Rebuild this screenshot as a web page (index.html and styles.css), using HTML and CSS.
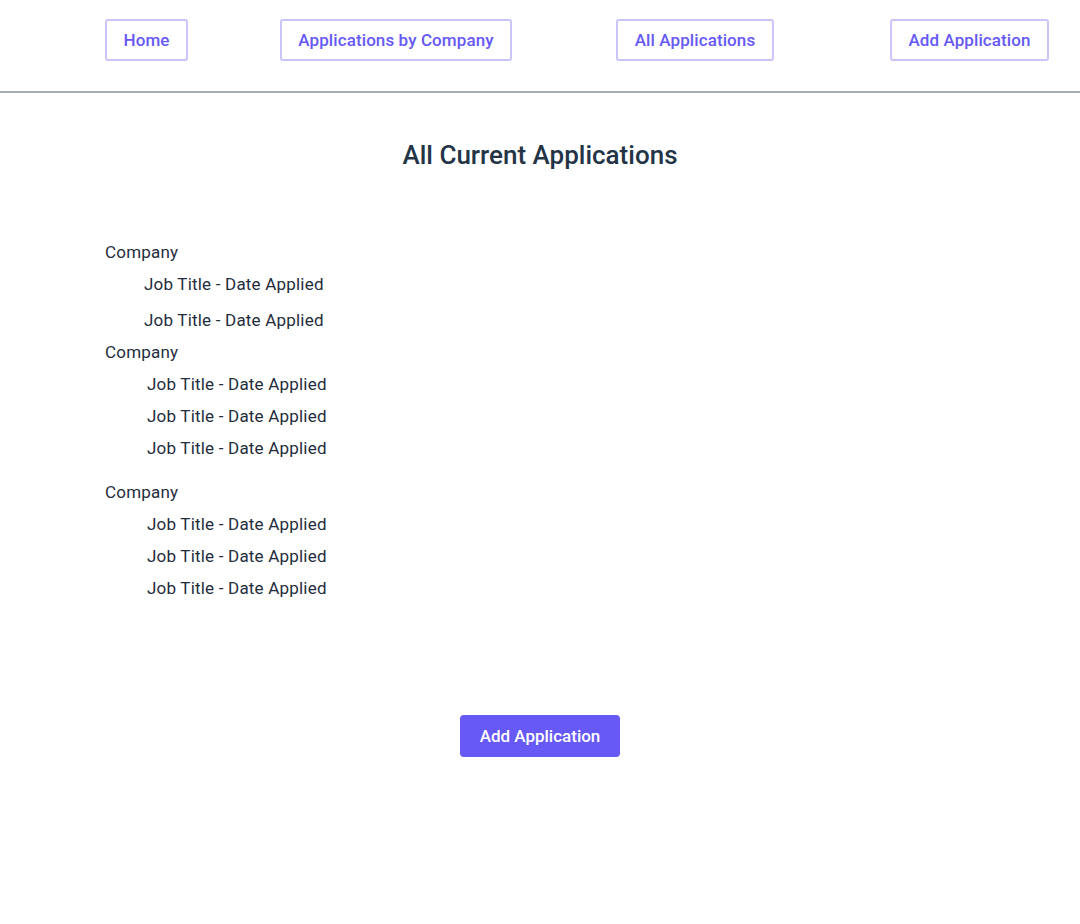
FILE: index.html
```html
<!DOCTYPE html>
<html>
<head>
<meta charset="utf-8">
<link rel="stylesheet" href="styles.css">
</head>
<body>
<header class="nav">
  <a class="nav-btn home">Home</a>
  <a class="nav-btn by-company">Applications by Company</a>
  <a class="nav-btn all">All Applications</a>
  <a class="nav-btn add">Add Application</a>
</header>
<main class="main">
  <h1 class="title">All Current Applications</h1>
  <section class="list">
    <div class="group g1">
      <div class="company">Company</div>
      <div class="job">Job Title - Date Applied</div>
      <div class="job job-gap">Job Title - Date Applied</div>
    </div>
    <div class="group g2">
      <div class="company">Company</div>
      <div class="job">Job Title - Date Applied</div>
      <div class="job">Job Title - Date Applied</div>
      <div class="job">Job Title - Date Applied</div>
    </div>
    <div class="group g3">
      <div class="company">Company</div>
      <div class="job">Job Title - Date Applied</div>
      <div class="job">Job Title - Date Applied</div>
      <div class="job">Job Title - Date Applied</div>
    </div>
  </section>
  <div class="actions">
    <button class="primary">Add Application</button>
  </div>
</main>
</body>
</html>
```
FILE: styles.css
```css
* { box-sizing: border-box; }
html, body { margin: 0; padding: 0; background: #fff; }
body {
  font-family: Roboto, "Noto Sans", sans-serif;
  color: #243447;
}
.nav {
  display: flex;
  align-items: flex-start;
  height: 93px;
  padding: 19px 0 0 105px;
  border-bottom: 2px solid #a3adb7;
}
.nav-btn {
  display: flex;
  align-items: center;
  justify-content: center;
  height: 42px;
  border: 2px solid #c9c5fb;
  border-radius: 3px;
  color: #6659f5;
  font-size: 17px;
  font-weight: 500;
  letter-spacing: 0.1px;
}
.home { width: 83px; }
.by-company { width: 232px; margin-left: 92px; }
.all { width: 158px; margin-left: 104px; }
.add { width: 159px; margin-left: 116px; }
.main { display: flex; flex-direction: column; }
.title {
  margin: 45px 0 0;
  text-align: center;
  font-size: 26px;
  font-weight: 500;
  line-height: 34px;
  color: #243447;
}
.list {
  margin-top: 64px;
  padding-left: 105px;
  font-size: 17px;
  letter-spacing: 0.2px;
  color: #1f2d3d;
}
.company, .job { line-height: 32px; }
.g1 .job { padding-left: 39px; }
.g1 .job-gap { margin-top: 4px; }
.g2 .job, .g3 .job { padding-left: 42px; }
.g3 { margin-top: 12px; }
.actions {
  display: flex;
  justify-content: center;
  margin-top: 111px;
}
.primary {
  width: 160px;
  height: 42px;
  border: none;
  border-radius: 4px;
  background: #6659f5;
  color: #fff;
  font-family: Roboto, "Noto Sans", sans-serif;
  font-size: 17px;
  font-weight: 500;
}
```
